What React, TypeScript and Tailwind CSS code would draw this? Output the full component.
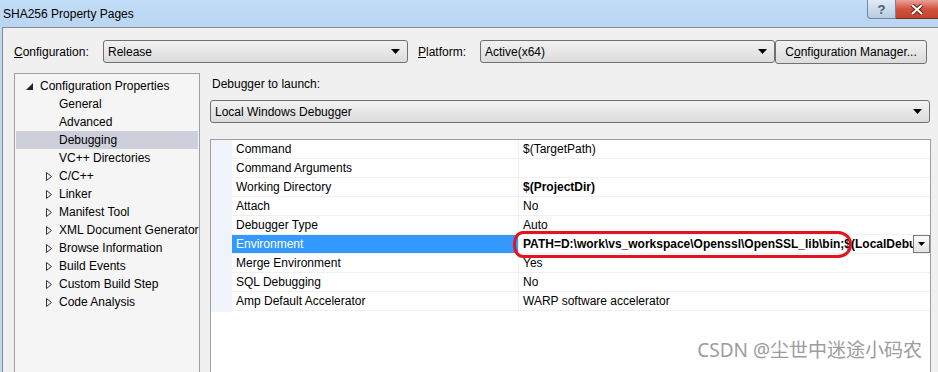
import React from "react";

const font = { fontFamily: '"Liberation Sans", Arial, sans-serif' };

function Arrow() {
  return (
    <svg width="9" height="5" viewBox="0 0 9 5" className="shrink-0">
      <path d="M0 0 H9 L4.5 5 Z" fill="#000" />
    </svg>
  );
}

function Combo({ text, className }: { text: string; className: string }) {
  return (
    <div
      className={`flex items-center justify-between h-[23px] border border-[#707070] rounded-[3px] bg-gradient-to-b from-[#f2f2f2] to-[#dcdcdc] pl-[4px] pr-[7px] ${className}`}
    >
      <span className="text-[12px] text-black">{text}</span>
      <Arrow />
    </div>
  );
}

const treeItems: { label: string; level: number; arrow?: "open" | "closed"; selected?: boolean }[] = [
  { label: "Configuration Properties", level: 0, arrow: "open" },
  { label: "General", level: 1 },
  { label: "Advanced", level: 1 },
  { label: "Debugging", level: 1, selected: true },
  { label: "VC++ Directories", level: 1 },
  { label: "C/C++", level: 1, arrow: "closed" },
  { label: "Linker", level: 1, arrow: "closed" },
  { label: "Manifest Tool", level: 1, arrow: "closed" },
  { label: "XML Document Generator", level: 1, arrow: "closed" },
  { label: "Browse Information", level: 1, arrow: "closed" },
  { label: "Build Events", level: 1, arrow: "closed" },
  { label: "Custom Build Step", level: 1, arrow: "closed" },
  { label: "Code Analysis", level: 1, arrow: "closed" },
];

const rows: { name: string; value: string; bold?: boolean; selected?: boolean }[] = [
  { name: "Command", value: "$(TargetPath)" },
  { name: "Command Arguments", value: "" },
  { name: "Working Directory", value: "$(ProjectDir)", bold: true },
  { name: "Attach", value: "No" },
  { name: "Debugger Type", value: "Auto" },
  {
    name: "Environment",
    value: "PATH=D:\\work\\vs_workspace\\Openssl\\OpenSSL_lib\\bin;$(LocalDebuggerEnvironment)",
    bold: true,
    selected: true,
  },
  { name: "Merge Environment", value: "Yes" },
  { name: "SQL Debugging", value: "No" },
  { name: "Amp Default Accelerator", value: "WARP software accelerator" },
];

export default function App() {
  return (
    <div className="w-[938px] h-[372px] overflow-hidden relative bg-[#bfdaf5] text-[12px] text-black" style={font}>
      {/* title bar */}
      <div className="h-[27px] flex items-start justify-between bg-gradient-to-b from-[#c3ddf6] to-[#b8d5f2]">
        <div className="pl-[3px] pt-[5px] text-[12px] text-black">SHA256 Property Pages</div>
        <div className="flex">
          <div className="w-[29px] h-[19px] border border-[#6f87a6] border-t-0 rounded-bl-[4px] bg-gradient-to-b from-[#e1ebf6] to-[#b9cbe0] flex items-center justify-center text-[#4a5a72] text-[13px] font-bold leading-none">
            ?
          </div>
          <div className="w-[42px] h-[19px] border-b border-[#7a2a22] bg-gradient-to-b from-[#e9a196] via-[#d0513e] to-[#c2452f] flex items-center justify-center">
            <svg width="14" height="11" viewBox="0 0 14 11">
              <path d="M2 1 L12 10 M12 1 L2 10" stroke="#5a1810" strokeWidth="4" />
              <path d="M2 1 L12 10 M12 1 L2 10" stroke="#fff" strokeWidth="2.2" />
            </svg>
          </div>
        </div>
      </div>

      {/* body */}
      <div className="ml-[2px] h-[345px] bg-[#f0f0f0] border-t border-l border-[#8a8a8a] flex flex-col pl-[11px]">
        {/* config row */}
        <div className="flex items-center h-[23px] mt-[12px]">
          <div className="w-[89px] text-[12px]">
            <span className="underline">C</span>onfiguration:
          </div>
          <Combo text="Release" className="w-[305px]" />
          <div className="ml-[10px] w-[62px] text-[12px]">
            <span className="underline">P</span>latform:
          </div>
          <Combo text="Active(x64)" className="w-[295px]" />
          <div className="w-[152px] h-[24px] border border-[#707070] rounded-[3px] bg-gradient-to-b from-[#f2f2f2] to-[#dcdcdc] flex items-center justify-center text-[12px]">
            C<span className="underline">o</span>nfiguration Manager...
          </div>
        </div>

        <div className="flex mt-[10px] flex-1 min-h-0">
          {/* tree */}
          <div className="w-[186px] shrink-0 border border-[#a0a0a0] border-b-0 bg-[#f5f5f5] pt-[3px] pl-[1px] pr-[1px] overflow-hidden">
            {treeItems.map((t) => (
              <div
                key={t.label}
                className={`h-[18px] flex items-center relative whitespace-nowrap ${t.selected ? "bg-[#cdd0db]" : ""}`}
              >
                {t.arrow === "open" && (
                  <svg width="7" height="7" viewBox="0 0 7 7" className="absolute left-[10px] top-[6px]">
                    <path d="M7 0 V7 H0 Z" fill="#222" />
                  </svg>
                )}
                {t.arrow === "closed" && (
                  <svg width="6" height="9" viewBox="0 0 6 9" className="absolute left-[30px] top-[5px]">
                    <path d="M0.5 0.5 L5.5 4.5 L0.5 8.5 Z" fill="none" stroke="#333" strokeWidth="1" />
                  </svg>
                )}
                <span className={t.level === 0 ? "pl-[24px]" : "pl-[43px]"}>{t.label}</span>
              </div>
            ))}
          </div>

          {/* right column */}
          <div className="ml-[10px] w-[721px] shrink-0 flex flex-col">
            <div className="h-[20px] flex items-center pl-[2px] mt-[1px]">Debugger to launch:</div>
            <Combo text="Local Windows Debugger" className="w-[720px] mt-[6px]" />
            <div className="relative mt-[16px] w-[721px] flex-1 border border-[#a0a0a0] border-b-0 bg-white flex">
              <div className="w-[21px] shrink-0 bg-[#f0f3fa] h-[172px]" />
              <div className="flex-1 min-w-0 flex flex-col">
                {rows.map((r) => (
                  <div key={r.name} className="h-[19px] flex border-b border-[#f0f0f0]">
                    <div
                      className={`w-[287px] shrink-0 pl-[4px] flex items-center border-r border-[#f0f0f0] ${
                        r.selected ? "bg-[#3399ff] text-white" : ""
                      }`}
                    >
                      {r.name}
                    </div>
                    <div className="flex-1 min-w-0 flex items-center pl-[4px] relative overflow-hidden">
                      <span className={`whitespace-nowrap overflow-hidden ${r.bold ? "font-bold" : ""} ${r.selected ? "pr-[18px]" : ""}`}>
                        {r.value}
                      </span>
                      {r.selected && (
                        <div className="absolute right-0 top-[0px] w-[17px] h-[18px] border border-[#7a7a7a] bg-gradient-to-b from-[#fafafa] to-[#e4e4e4] flex items-center justify-center">
                          <svg width="7" height="4" viewBox="0 0 7 4">
                            <path d="M0 0 H7 L3.5 4 Z" fill="#000" />
                          </svg>
                        </div>
                      )}
                    </div>
                  </div>
                ))}
              </div>
              {/* red annotation */}
              <div className="absolute left-[302px] top-[91px] w-[339px] h-[27px] border-[3px] border-[#e3141f] rounded-[10px_14px_14px_10px/12px_13px_13px_12px]" />
            </div>
          </div>
        </div>
      </div>

      {/* watermark */}
      <div
        className="absolute right-[16px] top-[341px] text-[19px] text-[#9c9c9c] leading-none"
        style={{ fontFamily: '"Noto Sans", "Noto Sans CJK SC", sans-serif', textShadow: "0 0 2px #fff" }}
      >
        CSDN @尘世中迷途小码农
      </div>
    </div>
  );
}
